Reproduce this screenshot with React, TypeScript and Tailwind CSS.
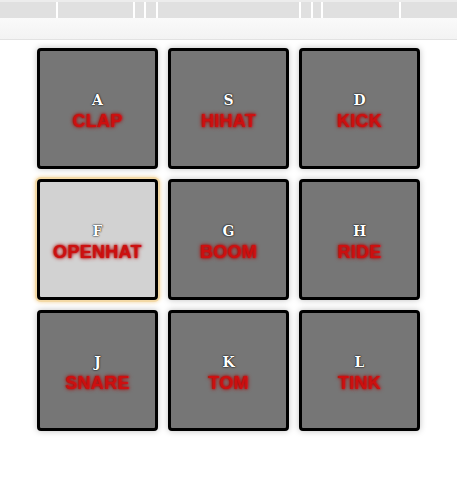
const pads = [
  { key: "A", sound: "clap" },
  { key: "S", sound: "hihat" },
  { key: "D", sound: "kick" },
  { key: "F", sound: "openhat", playing: true },
  { key: "G", sound: "boom" },
  { key: "H", sound: "ride" },
  { key: "J", sound: "snare" },
  { key: "K", sound: "tom" },
  { key: "L", sound: "tink" },
];

// gaps between the white ticks in the toolbar strip
const ticks = [56, 75, 9, 10, 141, 10, 8, 76];

function Pad({ k, sound, playing }: { k: string; sound: string; playing?: boolean }) {
  return (
    <div
      className={
        "flex h-[121px] w-[121px] flex-col items-center justify-center rounded-[4px] border-[3px] border-black pt-[5px] " +
        (playing
          ? "bg-[#d2d2d2] shadow-[0_0_0_2px_#f3d9a6,0_0_4px_2px_#f0d098]"
          : "bg-[#767676] shadow-[0_0_6px_rgba(0,0,0,0.25)]")
      }
    >
      <kbd className="font-['DejaVu_Serif',serif] text-[14px] font-black leading-none text-white [text-shadow:0_0_2px_#000,0_0_1px_#000]">
        {k}
      </kbd>
      <span className="mt-[5px] font-['Liberation_Sans',Arial,sans-serif] text-[18px] font-bold uppercase leading-none tracking-[0.3px] text-[#cc1010] [text-shadow:0_0_4px_#b00000,0_0_2px_#c00000]">
        {sound}
      </span>
    </div>
  );
}

export default function App() {
  return (
    <div className="min-h-screen bg-white">
      {/* toolbar strip */}
      <div className="border-b border-[#e2e2e2]">
        <div className="h-[2px] bg-[#ececec]" />
        <div className="flex h-[16px] bg-[#e0e0e0]">
          {ticks.map((w, i) => (
            <div key={i} className="flex" style={{ marginLeft: w }}>
              <div className="w-[2px] bg-white" />
            </div>
          ))}
        </div>
        <div className="h-[21px] bg-gradient-to-b from-[#fafafa] to-[#f3f3f3]" />
      </div>

      <div className="mx-auto mt-[8px] grid w-max grid-cols-3 gap-x-[10px] gap-y-[10px]">
        {pads.map((p) => (
          <Pad key={p.key} k={p.key} sound={p.sound} playing={p.playing} />
        ))}
      </div>
    </div>
  );
}
